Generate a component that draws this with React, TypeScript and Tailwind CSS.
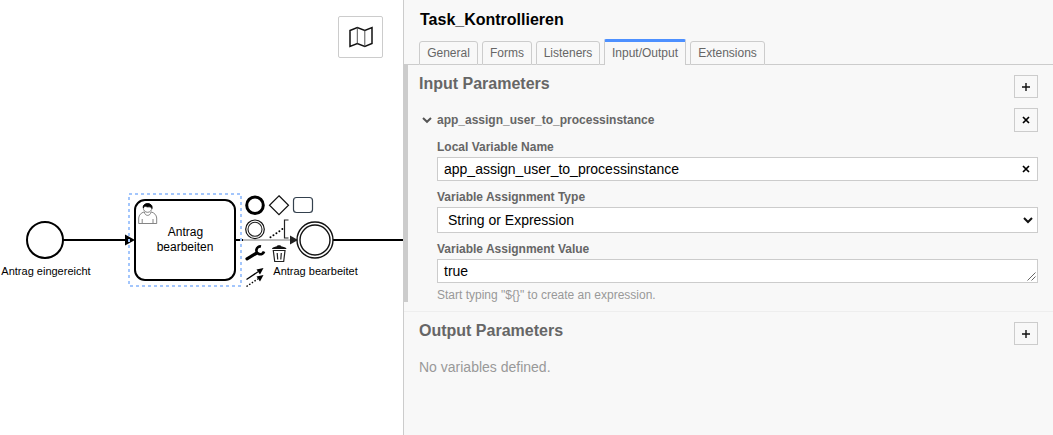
import React from "react";

const tabs = ["General", "Forms", "Listeners", "Input/Output", "Extensions"];
const tabWidths = ["w-[59px]", "w-[50px]", "w-[64px]", "w-[82px]", "w-[75px]"];

function Plus() {
  return (
    <svg width="8" height="8" viewBox="0 0 8 8">
      <path d="M0 4H8M4 0V8" stroke="#111" strokeWidth="1.4" />
    </svg>
  );
}

function Cross() {
  return (
    <svg width="8" height="8" viewBox="0 0 8 8">
      <path d="M1 1L7 7M7 1L1 7" stroke="#000" strokeWidth="1.700" />
    </svg>
  );
}

function SquareButton({ children }: { children: React.ReactNode }) {
  return (
    <button className="flex h-full w-6 items-center justify-center border border-[#ccc] bg-[#f8f8f8]">
      {children}
    </button>
  );
}

function Diagram() {
  return (
    <svg width="403" height="435" viewBox="0 0 403 435" fill="none" className="block" fontFamily="'Liberation Sans', Arial, sans-serif">
      <circle cx="45" cy="240" r="18" stroke="#000" strokeWidth="2" />
      <path d="M63 240H128M235 240H243M333 240H403" stroke="#000" strokeWidth="2" />
      <path d="M243 240H291" stroke="#aaa" strokeWidth="1.3" />
      <path d="M290 235.5L298 240L290 244.5Z" fill="#222" />
      <rect x="135" y="200" width="100" height="80" rx="10" fill="#fff" stroke="#000" strokeWidth="2" />
      <path d="M125 234.500L135 240L125 245.500Z" fill="#000" />
      <rect x="129" y="194" width="112" height="92" stroke="#a3c6fc" strokeWidth="2" strokeDasharray="3 3" />
      <g stroke="#666" strokeWidth=".8">
        <path d="M144.300 211.800C140.800 213 139 215 138.700 218V223.500H156.700V218C156.400 215 154.600 213 151 211.800" />
        <path d="M142.200 219V223M153 219V223M144.300 212C145 216.500 150.300 216.500 151 212" />
        <circle cx="147.600" cy="208" r="4.300" />
        <path d="M143.300 208C142 202 153.500 202 152 208.500C150.500 205.800 148 207.500 146.300 206.600C145 206 144 206.600 143.300 208Z" fill="#000" stroke="#000" />
      </g>
      <g fill="#000" fontSize="12" textAnchor="middle">
        <text x="185.500" y="236">Antrag</text>
        <text x="185" y="251">bearbeiten</text>
      </g>
      <g fill="#000" fontSize="11" textAnchor="middle">
        <text x="46" y="275">Antrag eingereicht</text>
        <text x="315.500" y="275">Antrag bearbeitet</text>
      </g>
      <circle cx="315" cy="240" r="18" stroke="#111" strokeWidth="1.400" />
      <circle cx="315" cy="240" r="15" stroke="#111" strokeWidth="1.400" />

      <circle cx="255" cy="205.200" r="8.300" stroke="#000" strokeWidth="3" />
      <path d="M279 195.800L288.500 205.200L279 214.600L269.500 205.200Z" stroke="#111" strokeWidth="1.200" />
      <rect x="293.500" y="197.500" width="19" height="15" rx="3" stroke="#34414e" strokeWidth="1.200" />
      <circle cx="255" cy="229.300" r="9.300" stroke="#111" strokeWidth="1.200" />
      <circle cx="255" cy="229.300" r="7" stroke="#222" strokeWidth="1.100" />
      <path d="M270.500 237.300L282.500 229" stroke="#000" strokeWidth="2" strokeLinecap="round" strokeDasharray="0 3.600" />
      <path d="M288.500 220H284.500V238H288.500" stroke="#222" strokeWidth="1.200" />
      <path d="M247 258.800L256 253.500" stroke="#000" strokeWidth="3.200" strokeLinecap="round" />
      <path d="M261 246.500A3.900 3.900 0 1 0 264 251.500" stroke="#000" strokeWidth="2.700" />
      <path d="M272 249C272 247.300 275 246.700 276.500 246.500C277 244.800 281 244.800 281.500 246.500C283 246.700 286.500 247.300 286.500 249Z" fill="#111" />
      <path d="M273.300 250.500H285L283.700 261.500H274.700ZM277.200 253L277.700 259.500M281.300 253L280.800 259.500" stroke="#222" strokeWidth="1.200" />
      <path d="M246.500 279.500L258 271.800" stroke="#000" strokeWidth="1.300" />
      <path d="M263.500 268L260 274.500L256.500 269.500Z" fill="#000" />
      <path d="M246.500 286.500L258 278.800" stroke="#000" strokeWidth="1.400" strokeDasharray="1.500 1.700" />
      <path d="M263.500 275L260 281.500L256.500 276.500Z" fill="#000" />
    </svg>
  );
}

export default function App() {
  return (
    <div className="flex h-[435px] w-[1053px] overflow-hidden bg-white font-['Liberation_Sans',Arial,sans-serif] text-[#666]">
      <div className="relative w-[403px] shrink-0">
        <Diagram />
        <button className="absolute left-[338px] top-4 flex h-[42px] w-[45px] items-center justify-center rounded-[2px] border border-[#ccc] bg-white">
          <svg width="24" height="22" viewBox="0 0 24 22" fill="none">
            <path d="M1 4.500L8.300 1.500L15.800 4.500L23 1.500V17.500L15.800 20.500L8.300 17.500L1 20.500Z" stroke="#111" strokeWidth="1.500" />
            <path d="M8.300 1.500V17.500M15.800 4.500V20.500" stroke="#555" strokeWidth="1" />
          </svg>
        </button>
      </div>

      <aside className="flex min-w-0 grow flex-col border-l border-[#ccc] bg-[#f8f8f8]">
        <header className="h-[39px] pl-4 pt-[11px] text-[16px] font-bold leading-[18px] text-black">Task_Kontrollieren</header>
        <nav className="flex h-[26px] shrink-0 items-end text-[12px] leading-[14px]">
          <span className="w-[15px] self-end border-b border-[#ccc]" />
          {tabs.map((tab, i) => (
            <React.Fragment key={tab}>
              {i > 0 && <span className="w-1 border-b border-[#ccc]" />}
              <button
                className={`${tabWidths[i]} shrink-0 whitespace-nowrap border-x border-[#ccc] text-center ${
                  tab === "Input/Output"
                    ? "h-[26px] rounded-t-[2px] border-t-[3px] border-t-[#4d90ff] pb-[1px]"
                    : "h-6 rounded-t-[3px] border-y"
                }`}
              >
                {tab}
              </button>
            </React.Fragment>
          ))}
          <span className="grow border-b border-[#ccc]" />
        </nav>

        <section className="flex h-[247px] shrink-0 border-b border-[#eee]">
          <div className="h-[237px] w-1 shrink-0 bg-[#ccc]" />
          <div className="flex grow flex-col pl-[11px] pr-[15px]">
            <div className="flex h-[43px] justify-between pt-[10px]">
              <h2 className="text-[16px] font-bold leading-[18px]">Input Parameters</h2>
              <div className="h-[23px]"><SquareButton><Plus /></SquareButton></div>
            </div>
            <div className="flex h-6 items-center">
              <svg width="12" height="8" viewBox="0 0 12 8" fill="none" className="ml-[2px] mr-1 shrink-0">
                <path d="M2 2L6 5.800L10 2" stroke="#555" strokeWidth="2" />
              </svg>
              <span className="grow text-[12px] font-bold">app_assign_user_to_processinstance</span>
              <SquareButton><Cross /></SquareButton>
            </div>
            <div className="flex flex-col pl-[18px]">
              <label className="mt-2 h-[17px] text-[12px] font-bold leading-[14px]">Local Variable Name</label>
              <div className="flex h-6 items-center justify-between border border-[#ccc] bg-white pl-[6px] pr-[7px] text-[14px] text-black">
                app_assign_user_to_processinstance
                <Cross />
              </div>
              <label className="mt-[9px] h-[17px] text-[12px] font-bold leading-[14px]">Variable Assignment Type</label>
              <div className="flex h-[26px] items-center justify-between border border-[#ccc] bg-white pl-[10px] pr-1 text-[14px] text-black">
                String or Expression
                <svg width="10" height="8" viewBox="0 0 10 8" fill="none">
                  <path d="M1 2L5 6L9 2" stroke="#111" strokeWidth="2" />
                </svg>
              </div>
              <label className="mt-[9px] h-[17px] text-[12px] font-bold leading-[14px]">Variable Assignment Value</label>
              <div className="flex h-6 items-center justify-between border border-[#ccc] bg-white pl-[6px] pr-px text-[14px] text-black">
                true
                <svg width="9" height="9" viewBox="0 0 9 9" className="mb-px self-end">
                  <path d="M.5 8.500L8.500 .5M4.500 8.500L8.500 4.500" stroke="#555" strokeWidth=".9" />
                </svg>
              </div>
              <p className="mt-[5px] text-[12px] leading-[14px] text-[#999]">Start typing "${"{}"}" to create an expression.</p>
            </div>
          </div>
        </section>

        <section className="pl-[15px] pr-[15px] pt-[10px]">
          <div className="flex h-[37px] justify-between">
            <h2 className="text-[16px] font-bold leading-[18px]">Output Parameters</h2>
            <div className="h-[23px]"><SquareButton><Plus /></SquareButton></div>
          </div>
          <p className="text-[14px] leading-[16px] text-[#999]">No variables defined.</p>
        </section>
      </aside>
    </div>
  );
}
